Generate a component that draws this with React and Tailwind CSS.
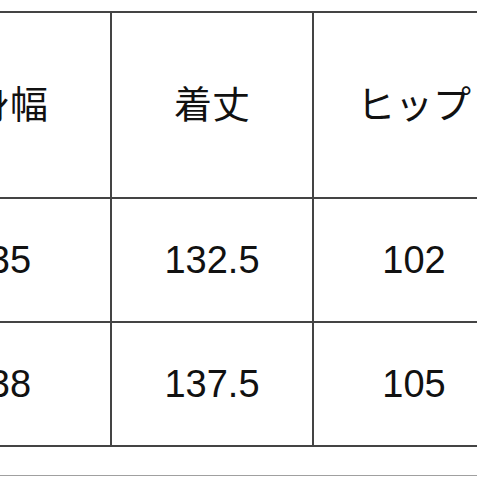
const rows = [
  { cells: ["身幅", "着丈", "ヒップ"], h: "h-[186px]" },
  { cells: ["35", "132.5", "102"], h: "h-[124px]" },
  { cells: ["38", "137.5", "105"], h: "h-[124px]" },
];

export default function App() {
  return (
    <div
      className="w-[477px] h-[477px] overflow-hidden bg-white pt-[11px] text-[#111]"
      style={{ fontFamily: '"Liberation Sans", "Noto Sans CJK JP", sans-serif' }}
    >
      <div className="-ml-[90px] w-[606px] border-t-2 border-[#444]">
        {rows.map((row, i) => (
          <div key={i} className={`flex border-b-2 border-[#444] ${row.h}`}>
            {row.cells.map((c, j) => (
              <div
                key={j}
                className="flex w-[202px] shrink-0 items-center justify-center border-r-2 border-[#444] text-[38px] leading-none"
              >
                {c}
              </div>
            ))}
          </div>
        ))}
      </div>
      <div className="mt-[28px] h-px w-full bg-[#a0a0a0]" />
    </div>
  );
}
